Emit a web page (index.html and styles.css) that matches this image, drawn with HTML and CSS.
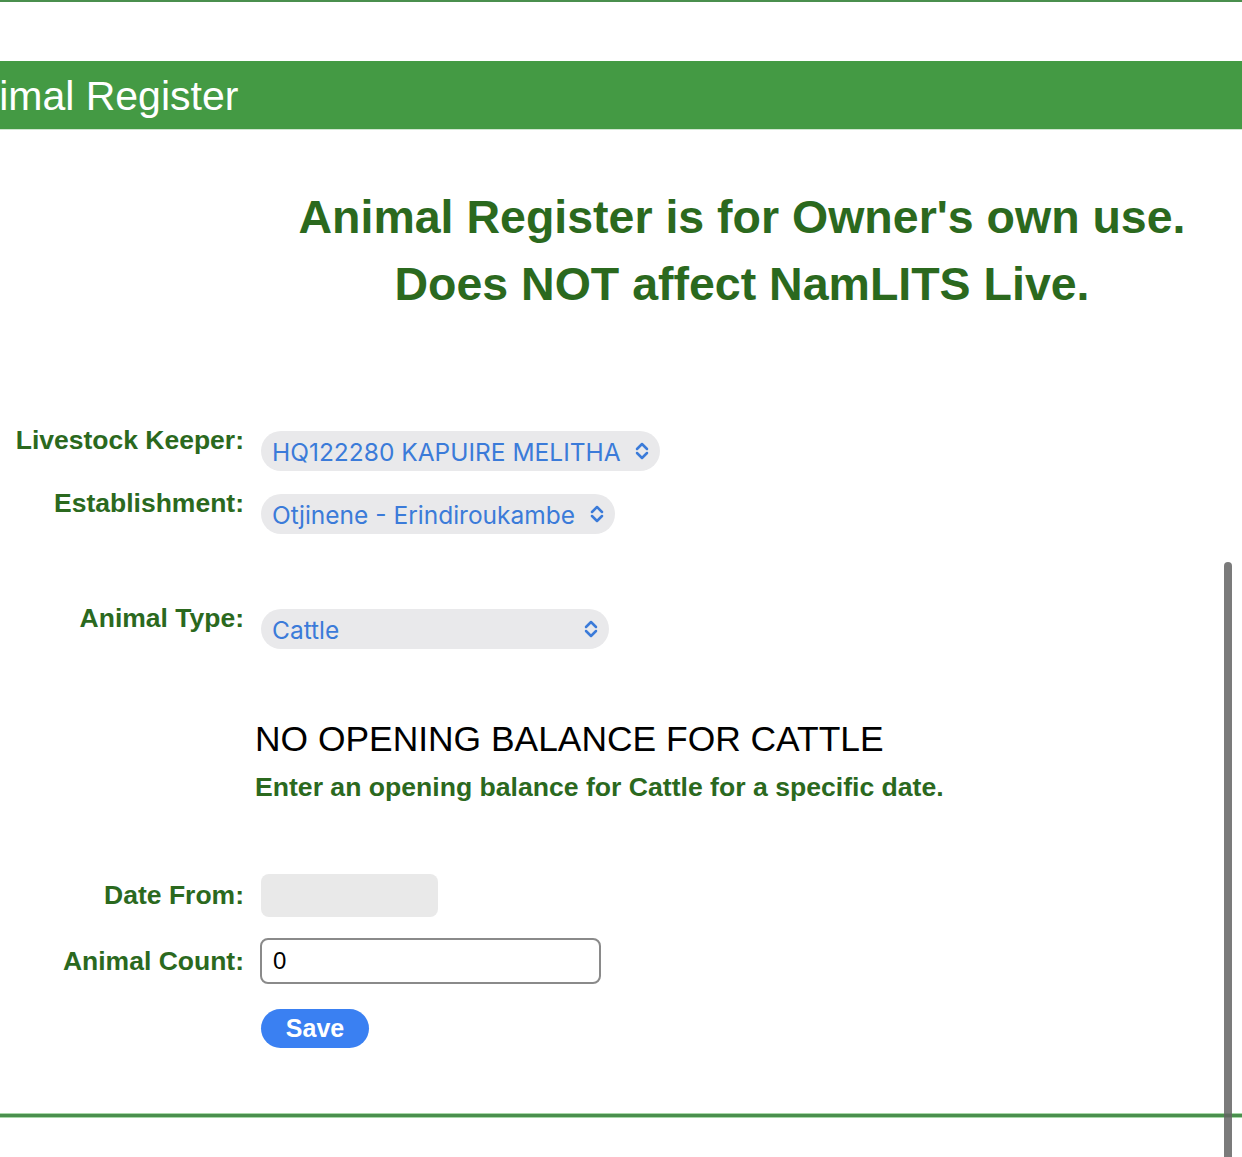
FILE: index.html
```html
<!DOCTYPE html>
<html>
<head>
<meta charset="utf-8">
<link rel="stylesheet" href="styles.css">
</head>
<body>
<div class="topline"></div>
<header class="bar"><span class="bar-title">Animal Register</span></header>
<h1 class="notice">Animal Register is for Owner's own use.<br>Does NOT affect NamLITS Live.</h1>

<div class="form">
  <div class="row sel-row">
    <label class="lbl">Livestock Keeper:</label>
    <div class="select w1"><span>HQ122280 KAPUIRE MELITHA</span>
      <svg class="chev" viewBox="0 0 16 20" width="16" height="20"><path d="M3 8 L8 3 L13 8 M3 12 L8 17 L13 12" fill="none" stroke="#3b7bd9" stroke-width="2.5" stroke-linecap="round" stroke-linejoin="round"/></svg>
    </div>
  </div>
  <div class="row sel-row r2">
    <label class="lbl">Establishment:</label>
    <div class="select w2"><span>Otjinene - Erindiroukambe</span>
      <svg class="chev" viewBox="0 0 16 20" width="16" height="20"><path d="M3 8 L8 3 L13 8 M3 12 L8 17 L13 12" fill="none" stroke="#3b7bd9" stroke-width="2.5" stroke-linecap="round" stroke-linejoin="round"/></svg>
    </div>
  </div>
  <div class="row sel-row r3">
    <label class="lbl">Animal Type:</label>
    <div class="select w3"><span>Cattle</span>
      <svg class="chev" viewBox="0 0 16 20" width="16" height="20"><path d="M3 8 L8 3 L13 8 M3 12 L8 17 L13 12" fill="none" stroke="#3b7bd9" stroke-width="2.5" stroke-linecap="round" stroke-linejoin="round"/></svg>
    </div>
  </div>

  <div class="balance">
    <h2 class="bal-title">NO OPENING BALANCE FOR CATTLE</h2>
    <p class="bal-sub">Enter an opening balance for Cattle for a specific date.</p>
  </div>

  <div class="row in-row">
    <label class="lbl">Date From:</label>
    <div class="date"></div>
  </div>
  <div class="row in-row r5">
    <label class="lbl">Animal Count:</label>
    <div class="count">0</div>
  </div>
  <div class="row r6">
    <div class="spacer"></div>
    <button class="save">Save</button>
  </div>
</div>
<div class="bottomline"></div>
<div class="scrollbar"></div>
</body>
</html>
```
FILE: styles.css
```css
html, body {
  margin: 0;
  padding: 0;
  background: #fff;
}
body {
  position: relative;
  width: 1242px;
  height: 1157px;
  overflow: hidden;
  font-family: "Liberation Sans", Arial, sans-serif;
}
.topline {
  height: 2px;
  background: #4a8f4e;
}
.bar {
  margin-top: 59px;
  height: 68px;
  background: #449a44;
  border-bottom: 1px solid #cfe6cf;
  display: flex;
  align-items: center;
  overflow: hidden;
}
.bar-title {
  color: #fff;
  font-size: 41px;
  margin-left: -51px;
  white-space: nowrap;
  padding-top: 2px;
}
.notice {
  margin: 0;
  margin-top: 54px;
  padding-left: 242px;
  text-align: center;
  color: #2b691e;
  font-size: 46.5px;
  font-weight: bold;
  line-height: 67px;
}
.form {
  margin-top: 112px;
}
.row {
  display: flex;
  gap: 17px;
}
.lbl, .spacer {
  width: 244px;
  flex: none;
  text-align: right;
  color: #2b691e;
  font-weight: bold;
  font-size: 26.5px;
}
.sel-row .lbl {
  line-height: 20px;
}
.r2 { margin-top: 22px; }
.r3 { margin-top: 74px; }
.select {
  height: 40px;
  box-sizing: border-box;
  background: #e9e9eb;
  border-radius: 20px;
  display: flex;
  align-items: center;
  justify-content: space-between;
  padding: 2px 10px 0 11px;
  color: #3b7bd9;
  font-family: "Inter", "Liberation Sans", sans-serif;
  font-size: 24.5px;
  margin-top: 1px;
}
.select .chev { flex: none; margin-left: 8px; margin-top: -2px; }
.w1 { width: 399px; }
.w2 { width: 354px; }
.w3 { width: 348px; }
.balance {
  margin-left: 255px;
  margin-top: 70px;
}
.bal-title {
  margin: 0;
  font-weight: normal;
  font-size: 35.4px;
  color: #000;
  line-height: 40px;
}
.bal-sub {
  margin: 13px 0 0;
  color: #2b691e;
  font-weight: bold;
  font-size: 26.6px;
  line-height: 30px;
}
.in-row {
  align-items: center;
  margin-top: 72px;
}
.date {
  width: 177px;
  height: 43px;
  background: #e9e9e9;
  border-radius: 8px;
}
.r5 { margin-top: 21px; }
.r5 .count { margin-left: -1px; }
.count {
  width: 341px;
  height: 46px;
  box-sizing: border-box;
  border: 2px solid #8a8a8a;
  border-radius: 8px;
  display: flex;
  align-items: center;
  padding-left: 11px;
  font-size: 24px;
  color: #000;
}
.r6 { margin-top: 25px; }
.save {
  width: 108px;
  height: 39px;
  border: none;
  border-radius: 20px;
  background: #3a80f2;
  color: #fff;
  font-family: "Liberation Sans", Arial, sans-serif;
  font-weight: bold;
  font-size: 25px;
  padding: 0;
}
.bottomline {
  position: absolute;
  left: 0;
  right: 0;
  top: 1113px;
  height: 3px;
  background: #4a8f4e;
  border-top: 1px solid #a8d8a8;
  border-bottom: 1px solid #a8d8a8;
}
.scrollbar {
  position: absolute;
  left: 1224px;
  top: 562px;
  width: 8px;
  height: 620px;
  border-radius: 4px;
  background: rgba(100,100,100,0.85);
}
```
